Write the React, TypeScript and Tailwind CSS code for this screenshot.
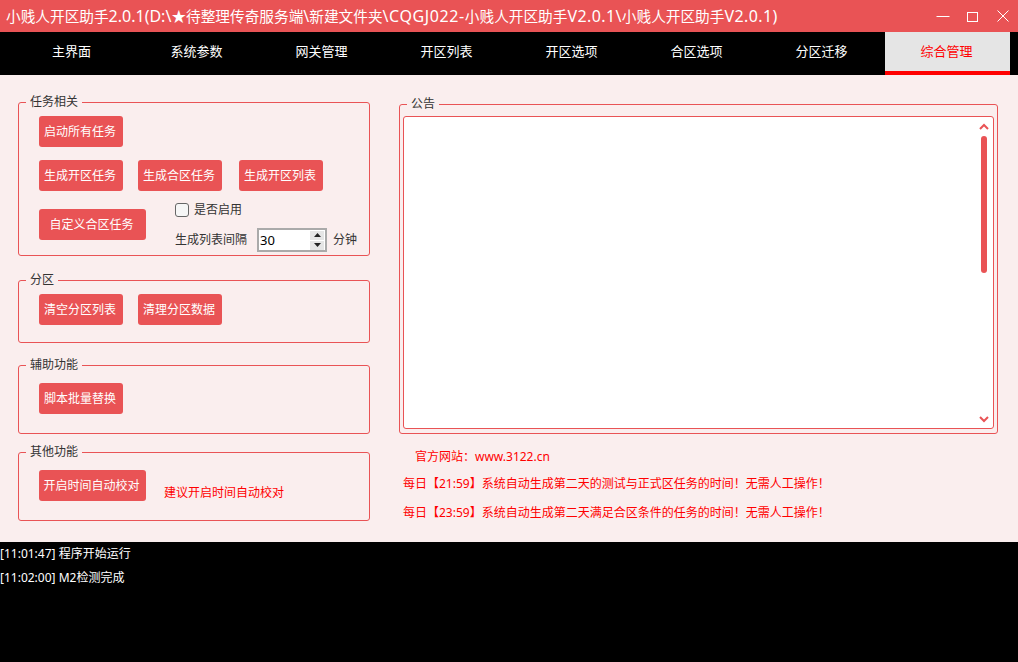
const tabs = ["主界面", "系统参数", "网关管理", "开区列表", "开区选项", "合区选项", "分区迁移", "综合管理"];

function Btn({ label, className = "w-[84px]" }: { label: string; className?: string }) {
  return (
    <button className={`h-[31px] shrink-0 rounded-[3px] bg-[#e95355] pr-[2px] text-center text-[12px] leading-[31px] text-white ${className}`}>
      {label}
    </button>
  );
}

function Group({ title, className, children }: { title: string; className: string; children: React.ReactNode }) {
  return (
    <fieldset className={`rounded-[3px] border border-[#e95355] ${className}`}>
      <legend className="ml-[7px] px-1 text-[12px] leading-4 text-[#333]">{title}</legend>
      {children}
    </fieldset>
  );
}

export default function App() {
  return (
    <div
      className="flex h-[662px] w-[1018px] flex-col overflow-hidden bg-[#faeeee]"
      style={{ fontFamily: '"Noto Sans", "Noto Sans CJK SC", sans-serif' }}
    >
      {/* title bar */}
      <div className="flex h-8 shrink-0 items-center bg-[#e95355] pl-[6px] text-white">
        <span className="flex-1 whitespace-nowrap text-[14.67px] leading-8">
          小贱人开区助手<span className="text-[16px]">2.0.1(D:\</span>★待整理传奇服务端<span className="text-[16px]">\</span>新建文件夹<span className="text-[16px] tracking-[0.6px]">\CQGJ022-</span>小贱人开区助手<span className="text-[16px] tracking-[0.4px]">V2.0.1\</span>小贱人开区助手<span className="text-[16px] tracking-[0.4px]">V2.0.1)</span>
        </span>
        <div className="flex items-center gap-[17px] pr-[9px]">
          <svg className="mr-[-1px]" width="14" height="14" viewBox="0 0 14 14" stroke="white" fill="none" strokeWidth="1">
            <path d="M0.5 7.5h13" />
          </svg>
          <svg width="14" height="14" viewBox="0 0 14 14" stroke="white" fill="none" strokeWidth="1">
            <rect x="1.5" y="3.5" width="10" height="9" />
          </svg>
          <svg width="12" height="12" viewBox="0 0 12 12" stroke="white" fill="none" strokeWidth="1">
            <path d="M0.5 0.5l11 11M11.5 0.5l-11 11" />
          </svg>
        </div>
      </div>

      {/* nav */}
      <div className="flex h-[43px] shrink-0 bg-black pl-[10px]">
        {tabs.map((t, i) =>
          i === 7 ? (
            <div key={t} className="h-[43px] w-[125px] border-b-4 border-[#ff0000] bg-[#e5e5e5] pr-[2px] pt-[1px] text-center text-[13px] leading-[37px] text-[#ff0000]">
              {t}
            </div>
          ) : (
            <div key={t} className="h-[43px] w-[125px] pr-[2px] pt-[1px] text-center text-[13px] leading-[37px] text-white">
              {t}
            </div>
          )
        )}
      </div>

      {/* main */}
      <div className="flex h-[467px] shrink-0 items-start">
        <div className="ml-[18px] flex w-[352px] flex-col pt-[19px]">
          <Group title="任务相关" className="h-[162px]">
            <div className="pl-5 pt-[6px]">
              <Btn label="启动所有任务" />
              <div className="mt-[13px] flex">
                <Btn label="生成开区任务" />
                <Btn label="生成合区任务" className="ml-[15px] w-[84px]" />
                <Btn label="生成开区列表" className="ml-[17px] w-[84px]" />
              </div>
              <div className="mt-3 flex">
                <Btn label="自定义合区任务" className="mt-[6px] w-[107px]" />
                <div className="ml-[29px] flex flex-col">
                  <label className="flex h-[14px] items-center text-[12px] text-[#333]">
                    <span className="h-[14px] w-[14px] rounded-[3px] border border-[#666] bg-[#f6f6f6]" />
                    <span className="ml-[5px]">是否启用</span>
                  </label>
                  <div className="mt-[11px] flex items-center text-[12px] text-[#333]">
                    <span className="w-[82px]">生成列表间隔</span>
                    <div className="flex h-6 w-[70px] items-center justify-between border-2 border-[#aaa] bg-white pl-[1px] pr-[1px]">
                      <span className="text-[13px] leading-5 text-black">30</span>
                      <div className="flex flex-col gap-[1px]">
                        <span className="flex h-[9px] w-[14px] items-center justify-center bg-[#e5e5e5]">
                          <svg width="7" height="4" viewBox="0 0 7 4"><path d="M3.5 0L7 4H0z" fill="#222" /></svg>
                        </span>
                        <span className="flex h-[9px] w-[14px] items-center justify-center bg-[#e5e5e5]">
                          <svg width="7" height="4" viewBox="0 0 7 4"><path d="M0 0h7L3.5 4z" fill="#222" /></svg>
                        </span>
                      </div>
                    </div>
                    <span className="ml-[6px]">分钟</span>
                  </div>
                </div>
              </div>
            </div>
          </Group>

          <Group title="分区" className="mt-4 h-[71px]">
            <div className="flex gap-[15px] pl-5 pt-[6px]">
              <Btn label="清空分区列表" />
              <Btn label="清理分区数据" />
            </div>
          </Group>

          <Group title="辅助功能" className="mt-[14px] h-[77px]">
            <div className="pl-5 pt-[10px]">
              <Btn label="脚本批量替换" />
            </div>
          </Group>

          <Group title="其他功能" className="mt-[10px] h-[77px]">
            <div className="flex pl-5 pt-[10px]">
              <Btn label="开启时间自动校对" className="w-[107px]" />
              <span className="ml-[18px] mt-[15px] text-[12px] leading-4 text-[#ff0000]">建议开启时间自动校对</span>
            </div>
          </Group>
        </div>

        <div className="ml-[29px] flex w-[599px] flex-col pt-[21px]">
          <Group title="公告" className="h-[338px]">
            <div className="px-[3px] pt-1">
              <div className="flex h-[313px] justify-end rounded-[3px] border border-[#e95355] bg-white pr-[3px]">
                <div className="flex w-[12px] flex-col items-center pb-[5px] pt-[6px]">
                  <svg width="10" height="7" viewBox="0 0 10 7" fill="none" stroke="#e95355" strokeWidth="2">
                    <path d="M1 6l4-4 4 4" />
                  </svg>
                  <div className="mt-[6px] h-[137px] w-[6px] rounded-full bg-[#e95355]" />
                  <div className="flex-1" />
                  <svg width="10" height="7" viewBox="0 0 10 7" fill="none" stroke="#e95355" strokeWidth="2">
                    <path d="M1 1l4 4 4-4" />
                  </svg>
                </div>
              </div>
            </div>
          </Group>
          <div className="ml-4 mt-[15px] text-[12px] leading-4 text-[#ff0000]">官方网站：www.3122.cn</div>
          <div className="ml-1 mt-[11px] text-[12px] leading-4 text-[#ff0000]">每日【21:59】系统自动生成第二天的测试与正式区任务的时间！无需人工操作！</div>
          <div className="ml-1 mt-[13px] text-[12px] leading-4 text-[#ff0000]">每日【23:59】系统自动生成第二天满足合区条件的任务的时间！无需人工操作！</div>
        </div>
      </div>

      {/* log */}
      <div className="flex-1 bg-black text-[12px] leading-6 text-white">
        <div>[11:01:47] 程序开始运行</div>
        <div>[11:02:00] M2检测完成</div>
      </div>
    </div>
  );
}
